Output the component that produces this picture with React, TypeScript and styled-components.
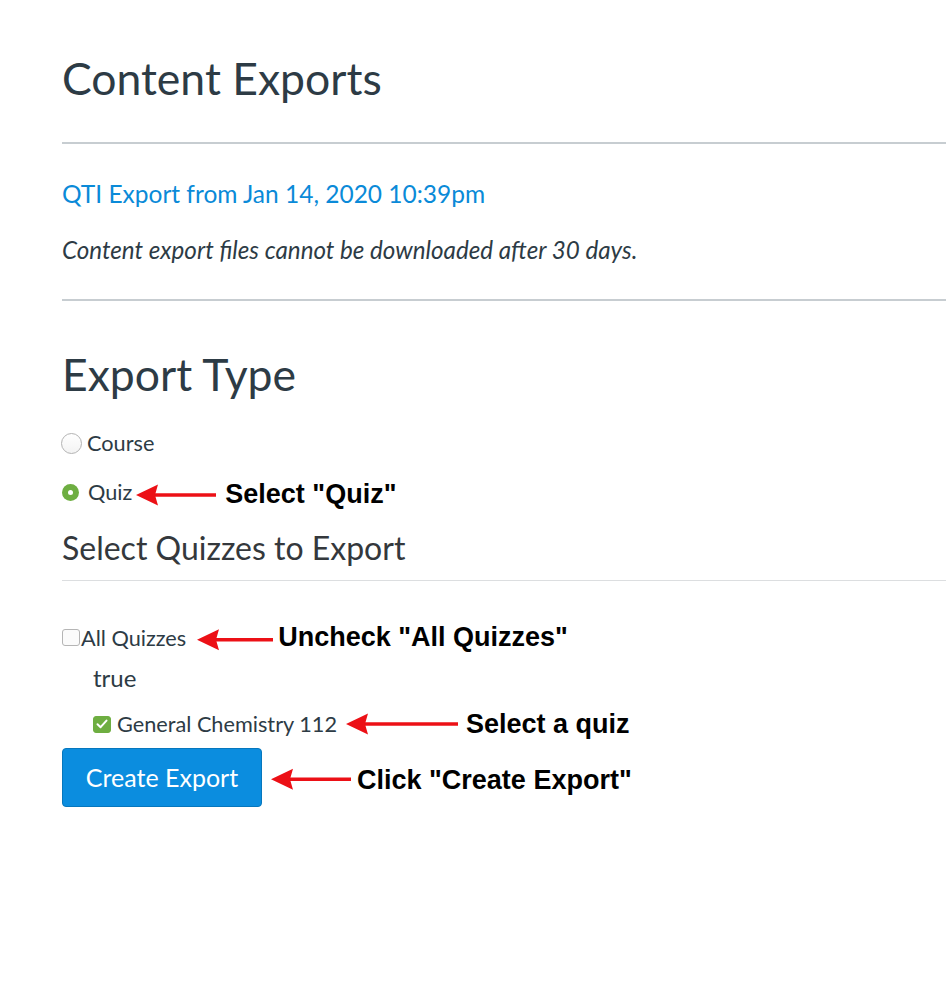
import styled, { createGlobalStyle } from "styled-components";

const GlobalStyle = createGlobalStyle`
  html, body {
    margin: 0;
    padding: 0;
    background: #ffffff;
  }
  body {
    font-family: Lato, "Open Sans", "Liberation Sans", sans-serif;
    color: #2d3b45;
  }
`;

const Page = styled.div`
  padding: 51px 0 120px 62px;
  display: flex;
  flex-direction: column;
`;

const Title = styled.h1<{ mt?: number }>`
  margin: ${({ mt }) => mt || 0}px 0 0;
  font-size: 44.5px;
  font-weight: 400;
  line-height: 1.2;
  color: #2d3b45;
`;

const Divider = styled.hr<{ mt: number; light?: boolean }>`
  margin: ${({ mt }) => mt}px 0 0;
  border: none;
  height: ${({ light }) => (light ? 1 : 2)}px;
  background: ${({ light }) => (light ? "#dcdee0" : "#c7cdd1")};
`;

const ExportLink = styled.a`
  margin-top: 35px;
  font-size: 24.5px;
  line-height: 1.2;
  color: #0a8ad8;
  text-decoration: none;
  align-self: flex-start;
`;

const Note = styled.p`
  margin: 26.5px 0 0;
  font-size: 24.2px;
  font-style: italic;
  line-height: 1.2;
  color: #2d3b45;
`;

const SubTitle = styled.h3`
  margin: 25px 0 0;
  font-size: 32px;
  font-weight: 400;
  line-height: 1.2;
  color: #34383c;
`;

const Row = styled.div<{ mt: number; indent?: number; h?: number }>`
  display: flex;
  align-items: center;
  margin-top: ${({ mt }) => mt}px;
  padding-left: ${({ indent }) => indent || 0}px;
  height: ${({ h }) => h || 24}px;
`;

const Label = styled.span`
  font-size: 21.7px;
  line-height: 24px;
  color: #2d3b45;
  white-space: nowrap;
`;

const Radio = styled.span<{ checked?: boolean }>`
  box-sizing: border-box;
  display: inline-block;
  border-radius: 50%;
  flex: none;
  ${({ checked }) =>
    checked
      ? `
    width: 17px;
    height: 17px;
    margin: 0 9px 0 0;
    background: #6eae41;
    position: relative;
    &::after {
      content: "";
      position: absolute;
      left: 6px;
      top: 6px;
      width: 5px;
      height: 5px;
      border-radius: 50%;
      background: #fff;
    }
  `
      : `
    width: 21px;
    height: 21px;
    margin: 0 5px 0 -1px;
    border: 1px solid #b3b3b3;
    background: linear-gradient(#ffffff, #f3f3f3);
  `}
`;

const Checkbox = styled.span<{ checked?: boolean }>`
  box-sizing: border-box;
  display: inline-flex;
  align-items: center;
  justify-content: center;
  flex: none;
  width: 18px;
  height: 17px;
  border-radius: 3px;
  margin-right: ${({ checked }) => (checked ? 6 : 1)}px;
  border: 1px solid ${({ checked }) => (checked ? "#6eae41" : "#b5b5b5")};
  background: ${({ checked }) => (checked ? "#6eae41" : "#fbfbfb")};
`;

const TrueText = styled.div`
  margin-top: 14.3px;
  padding-left: 31px;
  font-size: 24px;
  line-height: 1.2;
  color: #2d3b45;
`;

const Button = styled.button`
  box-sizing: border-box;
  width: 200px;
  height: 59px;
  padding: 0;
  border: 1px solid #0677bd;
  border-radius: 4px;
  background: #0b8ddf;
  color: #ffffff;
  font-family: Lato, "Open Sans", sans-serif;
  font-size: 25px;
  flex: none;
`;

const Callout = styled.div<{ gap: number }>`
  display: flex;
  align-items: center;
  margin-left: ${({ gap }) => gap}px;
  height: 0;
  overflow: visible;
`;

const ArrowBox = styled.div<{ drop: number }>`
  display: flex;
  transform: translateY(${({ drop }) => drop}px);
`;

const CalloutText = styled.span<{ textGap: number; drop: number }>`
  margin-left: ${({ textGap }) => textGap}px;
  transform: translateY(${({ drop }) => drop}px);
  font-family: "Liberation Sans", Arial, sans-serif;
  font-weight: 700;
  font-size: 27px;
  line-height: 31px;
  color: #000000;
  white-space: nowrap;
`;

type ArrowProps = { length: number };

const Arrow = ({ length }: ArrowProps) => (
  <svg width={length} height={22} viewBox={`0 0 ${length} 22`}>
    <line x1={18} y1={11} x2={length} y2={11} stroke="#ec1016" strokeWidth={3.5} />
    <polygon points="0,11 22,0.5 19,11 22,21.5" fill="#ec1016" />
  </svg>
);

type NoteProps = {
  gap: number;
  length: number;
  textGap: number;
  arrowDrop?: number;
  textDrop?: number;
  children: string;
};

const Annotation = ({ gap, length, textGap, arrowDrop = 0, textDrop = 0, children }: NoteProps) => (
  <Callout gap={gap}>
    <ArrowBox drop={arrowDrop}>
      <Arrow length={length} />
    </ArrowBox>
    <CalloutText textGap={textGap} drop={textDrop}>
      {children}
    </CalloutText>
  </Callout>
);

const Check = () => (
  <svg width="12" height="10" viewBox="0 0 12 10">
    <path d="M1.5 5.2 L4.6 8.2 L10.5 1.6" fill="none" stroke="#fff" strokeWidth="2" strokeLinecap="round" strokeLinejoin="round" />
  </svg>
);

const App = () => {
  return (
    <Page>
      <GlobalStyle />
      <Title>Content Exports</Title>
      <Divider mt={38} />
      <ExportLink href="#">QTI Export from Jan 14, 2020 10:39pm</ExportLink>
      <Note>Content export files cannot be downloaded after 30 days.</Note>
      <Divider mt={35} />
      <Title mt={46}>Export Type</Title>
      <Row mt={30.5}>
        <Radio />
        <Label>Course</Label>
      </Row>
      <Row mt={25}>
        <Radio checked />
        <Label>Quiz</Label>
        <Annotation gap={4} length={80} textGap={9} arrowDrop={3} textDrop={2.4}>
          Select "Quiz"
        </Annotation>
      </Row>
      <SubTitle>Select Quizzes to Export</SubTitle>
      <Divider mt={12} light />
      <Row mt={45}>
        <Checkbox />
        <Label>All Quizzes</Label>
        <Annotation gap={11} length={76} textGap={5} arrowDrop={1.7} textDrop={0.3}>
          Uncheck "All Quizzes"
        </Annotation>
      </Row>
      <TrueText>true</TrueText>
      <Row mt={19.6} indent={31}>
        <Checkbox checked>
          <Check />
        </Checkbox>
        <Label>General Chemistry 112</Label>
        <Annotation gap={9} length={112} textGap={8}>
          Select a quiz
        </Annotation>
      </Row>
      <Row mt={11.3} h={59}>
        <Button>Create Export</Button>
        <Annotation gap={9} length={80} textGap={6} arrowDrop={2.2} textDrop={2.8}>
          Click "Create Export"
        </Annotation>
      </Row>
    </Page>
  );
};

export default App;
